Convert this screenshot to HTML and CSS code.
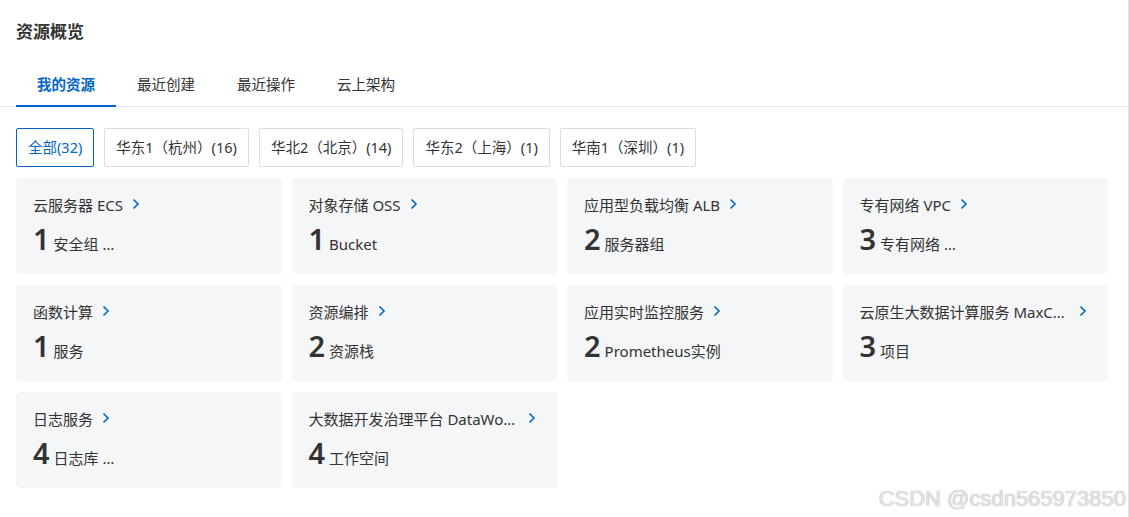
FILE: index.html
```html
<!DOCTYPE html>
<html>
<head>
  <meta charset="UTF-8">
  <title>资源概览</title>
  <link rel="stylesheet" href="styles.css">
</head>
<body>
  <div class="page">
    <h1 class="page-title">资源概览</h1>

    <div class="tabs">
      <div class="tab active">我的资源</div>
      <div class="tab">最近创建</div>
      <div class="tab">最近操作</div>
      <div class="tab">云上架构</div>
    </div>

    <div class="content">
      <div class="regions">
        <div class="region active">全部(32)</div>
        <div class="region">华东1（杭州）(16)</div>
        <div class="region">华北2（北京）(14)</div>
        <div class="region">华东2（上海）(1)</div>
        <div class="region">华南1（深圳）(1)</div>
      </div>

      <div class="cards">
        <div class="card">
          <div class="card-title"><span class="name">云服务器 ECS</span><svg class="arrow" viewBox="0 0 8 12"><path d="M1.5 1.5 L6 6 L1.5 10.5"/></svg></div>
          <div class="card-value"><span class="num">1</span><span class="unit">安全组 …</span></div>
        </div>
        <div class="card">
          <div class="card-title"><span class="name">对象存储 OSS</span><svg class="arrow" viewBox="0 0 8 12"><path d="M1.5 1.5 L6 6 L1.5 10.5"/></svg></div>
          <div class="card-value"><span class="num">1</span><span class="unit">Bucket</span></div>
        </div>
        <div class="card">
          <div class="card-title"><span class="name">应用型负载均衡 ALB</span><svg class="arrow" viewBox="0 0 8 12"><path d="M1.5 1.5 L6 6 L1.5 10.5"/></svg></div>
          <div class="card-value"><span class="num">2</span><span class="unit">服务器组</span></div>
        </div>
        <div class="card">
          <div class="card-title"><span class="name">专有网络 VPC</span><svg class="arrow" viewBox="0 0 8 12"><path d="M1.5 1.5 L6 6 L1.5 10.5"/></svg></div>
          <div class="card-value"><span class="num">3</span><span class="unit">专有网络 …</span></div>
        </div>

        <div class="card">
          <div class="card-title"><span class="name">函数计算</span><svg class="arrow" viewBox="0 0 8 12"><path d="M1.5 1.5 L6 6 L1.5 10.5"/></svg></div>
          <div class="card-value"><span class="num">1</span><span class="unit">服务</span></div>
        </div>
        <div class="card">
          <div class="card-title"><span class="name">资源编排</span><svg class="arrow" viewBox="0 0 8 12"><path d="M1.5 1.5 L6 6 L1.5 10.5"/></svg></div>
          <div class="card-value"><span class="num">2</span><span class="unit">资源栈</span></div>
        </div>
        <div class="card">
          <div class="card-title"><span class="name">应用实时监控服务</span><svg class="arrow" viewBox="0 0 8 12"><path d="M1.5 1.5 L6 6 L1.5 10.5"/></svg></div>
          <div class="card-value"><span class="num">2</span><span class="unit">Prometheus实例</span></div>
        </div>
        <div class="card">
          <div class="card-title"><span class="name">云原生大数据计算服务 MaxCompute</span><svg class="arrow" viewBox="0 0 8 12"><path d="M1.5 1.5 L6 6 L1.5 10.5"/></svg></div>
          <div class="card-value"><span class="num">3</span><span class="unit">项目</span></div>
        </div>

        <div class="card">
          <div class="card-title"><span class="name">日志服务</span><svg class="arrow" viewBox="0 0 8 12"><path d="M1.5 1.5 L6 6 L1.5 10.5"/></svg></div>
          <div class="card-value"><span class="num">4</span><span class="unit">日志库 …</span></div>
        </div>
        <div class="card">
          <div class="card-title"><span class="name">大数据开发治理平台 DataWorks</span><svg class="arrow" viewBox="0 0 8 12"><path d="M1.5 1.5 L6 6 L1.5 10.5"/></svg></div>
          <div class="card-value"><span class="num">4</span><span class="unit">工作空间</span></div>
        </div>
      </div>
    </div>

    <div class="watermark">CSDN @csdn565973850</div>
  </div>
</body>
</html>
```

FILE: styles.css
```css
* {
  margin: 0;
  padding: 0;
  box-sizing: border-box;
}

body {
  font-family: "Noto Sans", "Noto Sans CJK SC", sans-serif;
  color: #333;
  background: #fff;
}

.page {
  position: relative;
  width: 1129px;
  height: 517px;
  border-right: 1px solid #e3e3e3;
  overflow: hidden;
}

.page-title {
  font-size: 17px;
  font-weight: bold;
  line-height: 24px;
  padding: 20px 16px 0;
  color: #333;
}

.tabs {
  display: flex;
  margin-top: 18px;
  padding-left: 16px;
  border-bottom: 1px solid #e5e5e5;
}

.tab {
  width: 100px;
  height: 45px;
  line-height: 44px;
  text-align: center;
  font-size: 14.5px;
  color: #333;
  border-bottom: 2px solid transparent;
  margin-bottom: -1px;
}

.tab.active {
  color: #0064c8;
  font-weight: bold;
  border-bottom-color: #0064c8;
}

.content {
  padding: 21px 20px 0 16px;
}

.regions {
  display: flex;
  gap: 10px;
}

.region {
  height: 39px;
  line-height: 37px;
  padding: 0 11px;
  border: 1px solid #dedede;
  border-radius: 2px;
  font-size: 14.5px;
  color: #333;
  white-space: nowrap;
}

.region.active {
  border-color: #0064c8;
  color: #0064c8;
}

.cards {
  display: grid;
  grid-template-columns: repeat(4, minmax(0, 1fr));
  column-gap: 10px;
  row-gap: 11px;
  margin-top: 11px;
}

.card {
  min-width: 0;
  height: 96px;
  background: #f5f6f8;
  border-radius: 4px;
  padding: 16px 21px 0 17px;
}

.card-title {
  display: flex;
  align-items: center;
  height: 20px;
  font-size: 15px;
}

.card-title .name {
  min-width: 0;
  white-space: nowrap;
  overflow: hidden;
  text-overflow: ellipsis;
}

.arrow {
  flex: none;
  width: 8px;
  height: 12px;
  margin-left: 9px;
  fill: none;
  stroke: #0064c8;
  stroke-width: 1.6;
}

.card-value {
  display: flex;
  align-items: baseline;
  margin-top: 9px;
}

.num {
  font-size: 29px;
  font-weight: 600;
  line-height: 32px;
  color: #333;
}

.unit {
  font-size: 15px;
  margin-left: 4px;
  color: #333;
}

.watermark {
  position: absolute;
  right: 2px;
  bottom: 5px;
  font-family: "Liberation Sans", sans-serif;
  font-size: 22px;
  color: #e6e6e6;
  text-shadow: 0 0 1px #8c8c8c;
}
```
